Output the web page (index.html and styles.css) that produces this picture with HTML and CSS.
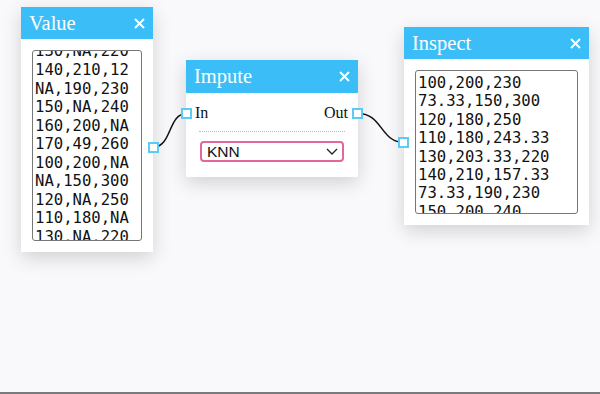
FILE: index.html
```html
<!DOCTYPE html>
<html lang="en">
<head>
    <meta charset="UTF-8">
    <title>Node editor</title>
    <link rel="stylesheet" href="styles.css">
</head>
<body>

<div class="editor">
    <svg class="wires" width="600" height="392">
        <path d="M153.5,147 C172,147 168,113.5 186.5,113.5" />
        <path d="M358,113.5 C383,113.5 380,142.5 404.5,142.5" />
    </svg>

    <!-- Value node -->
    <div class="node node-value">
        <div class="node-head">
            <span class="node-title">Value</span>
            <svg class="close" width="11" height="11" viewBox="0 0 11 11"><path d="M1 1L10 10M10 1L1 10" /></svg>
        </div>
        <div class="node-body">
            <div class="textbox">
<pre class="scrolled">130,NA,220
140,210,12
NA,190,230
150,NA,240
160,200,NA
170,49,260
100,200,NA
NA,150,300
120,NA,250
110,180,NA
130,NA,220</pre>
            </div>
        </div>
        <span class="socket socket-out"></span>
    </div>

    <!-- Impute node -->
    <div class="node node-impute">
        <div class="node-head">
            <span class="node-title">Impute</span>
            <svg class="close" width="11" height="11" viewBox="0 0 11 11"><path d="M1 1L10 10M10 1L1 10" /></svg>
        </div>
        <div class="node-body impute-body">
            <div class="io-row">
                <span class="socket socket-in"></span>
                <span>In</span>
                <span>Out</span>
                <span class="socket socket-out"></span>
            </div>
            <div class="separator"></div>
            <div class="select">
                <span>KNN</span>
                <svg width="12" height="7" viewBox="0 0 12 7"><path d="M1 1L6 6L11 1" /></svg>
            </div>
        </div>
    </div>

    <!-- Inspect node -->
    <div class="node node-inspect">
        <div class="node-head">
            <span class="node-title">Inspect</span>
            <svg class="close" width="11" height="11" viewBox="0 0 11 11"><path d="M1 1L10 10M10 1L1 10" /></svg>
        </div>
        <div class="node-body">
            <div class="textbox">
<pre>100,200,230
73.33,150,300
120,180,250
110,180,243.33
130,203.33,220
140,210,157.33
73.33,190,230
150,200,240</pre>
            </div>
        </div>
        <span class="socket socket-in"></span>
    </div>
</div>

<div class="bottom-bar"></div>

</body>
</html>
```

FILE: styles.css
```css
body {
    margin: 0;
    height: 394px;
    display: flex;
    flex-direction: column;
    background-color: #f9f9fb;
    font-family: "Liberation Serif", "DejaVu Serif", serif;
    overflow: hidden;
}

.editor {
    position: relative;
    flex: 1;
}

.bottom-bar {
    height: 2px;
    background-color: #7a7a7a;
}

.wires {
    position: absolute;
    left: 0;
    top: 0;
}

.wires path {
    fill: none;
    stroke: #111;
    stroke-width: 1.5;
}

/* nodes */
.node {
    position: absolute;
    display: flex;
    flex-direction: column;
    background-color: #ffffff;
    box-shadow: 0 6px 18px rgba(0, 0, 0, 0.16);
}

.node-value {
    left: 21px;
    top: 7px;
    width: 132px;
    height: 245px;
}

.node-impute {
    left: 186px;
    top: 60px;
    width: 172px;
    height: 117px;
}

.node-inspect {
    left: 404px;
    top: 27px;
    width: 185px;
    height: 198px;
}

.node-head {
    height: 32px;
    display: flex;
    align-items: center;
    justify-content: space-between;
    padding: 0 8px 0 8px;
    background-color: #3bbdf7;
    color: #ffffff;
    flex-shrink: 0;
}

.node-impute .node-head {
    height: 33px;
}

.node-title {
    font-size: 20.5px;
}

.close path {
    stroke: #ffffff;
    stroke-width: 2;
}

.node-body {
    flex: 1;
    min-height: 0;
    display: flex;
    flex-direction: column;
    padding: 11px;
}

/* text areas */
.textbox {
    flex: 1;
    min-height: 0;
    border: 1px solid #777;
    border-radius: 3px;
    padding: 3px 2px;
    overflow: hidden;
    background-color: #ffffff;
}

.textbox pre {
    margin: 0;
    font-family: "DejaVu Sans Mono", monospace;
    font-size: 15.6px;
    line-height: 18.4px;
    color: #111;
}

.textbox pre.scrolled {
    margin-top: -11.6px;
    line-height: 18.55px;
}

/* sockets */
.socket {
    position: absolute;
    width: 11px;
    height: 11px;
    box-sizing: border-box;
    border: 2px solid #5ccaf6;
    background-color: #ffffff;
}

.node-value .socket-out {
    right: -6px;
    top: 134.5px;
}

.node-inspect .socket-in {
    left: -6px;
    top: 110px;
}

/* impute */
.impute-body {
    padding: 10px 0 15px;
}

.io-row {
    position: relative;
    height: 20px;
    display: flex;
    align-items: center;
    justify-content: space-between;
    padding: 0 10px 0 9px;
    font-size: 16px;
    color: #111;
}

.io-row .socket {
    top: 5px;
}

.io-row .socket-in {
    left: -5px;
}

.io-row .socket-out {
    right: -5px;
}

.separator {
    margin: 8px 13px 9px;
    border-top: 1px dotted #bbb;
}

.select {
    margin: 0 14px;
    height: 21px;
    box-sizing: border-box;
    border: 2px solid #e3679b;
    border-radius: 4px;
    display: flex;
    align-items: center;
    justify-content: space-between;
    padding: 0 4px 0 5px;
    font-family: "Liberation Sans", Arial, sans-serif;
    font-size: 15.5px;
    color: #111;
}

.select path {
    fill: none;
    stroke: #222;
    stroke-width: 1.3;
}
```
